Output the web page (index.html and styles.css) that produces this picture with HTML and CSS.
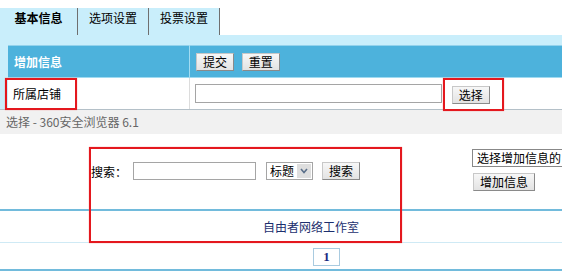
FILE: index.html
```html
<!DOCTYPE html>
<html lang="zh-CN">
<head>
  <meta charset="UTF-8" />
  <title>增加信息</title>
  <link rel="stylesheet" href="styles.css">
</head>
<body>
  <div class="tabs">
    <div class="tab active">基本信息</div>
    <div class="tab">选项设置</div>
    <div class="tab">投票设置</div>
  </div>

  <div class="panel">
    <table class="info">
      <tr class="head">
        <td class="label">增加信息</td>
        <td class="value">
          <button class="btn">提交</button>
          <button class="btn">重置</button>
        </td>
      </tr>
      <tr class="row">
        <td class="label">所属店铺</td>
        <td class="value">
          <input type="text" class="shop-input" />
          <button class="btn pick">选择</button>
        </td>
      </tr>
    </table>
  </div>

  <div class="titlebar">选择 - 360安全浏览器 6.1</div>

  <div class="popup">
    <div class="popup-top">
      <div class="search">
        <span class="search-label">搜索：</span>
        <input type="text" class="search-input" />
        <span class="select">
          <span class="select-text">标题</span>
          <span class="select-arrow">
            <svg width="10" height="8" viewBox="0 0 10 8"><path d="M2 2 L5 5.5 L8 2" fill="none" stroke="#5a6f8a" stroke-width="1.6"/></svg>
          </span>
        </span>
        <button class="btn">搜索</button>
      </div>
      <div class="side">
        <div class="side-box">选择增加信息的</div>
        <button class="btn side-btn">增加信息</button>
      </div>
    </div>
    <div class="studio">自由者网络工作室</div>
    <div class="pager"><span class="page">1</span></div>
  </div>

  <div class="mark mark-shop"></div>
  <div class="mark mark-pick"></div>
  <div class="mark mark-search"></div>
</body>
</html>
```

FILE: styles.css
```css
body {
  margin: 0;
  font-family: "Noto Sans CJK SC", "DejaVu Sans", sans-serif;
  font-size: 12px;
  color: #000;
  background: #fff;
  position: relative;
  overflow: hidden;
}

.tabs {
  display: flex;
  padding-top: 8px;
  height: 27px;
}

.tab {
  background: #c9eefb;
  border-right: 1px solid #6f6f6f;
  width: 70px;
  text-align: center;
  line-height: 18px;
  padding-top: 1px;
}

.tab.active {
  width: 77px;
  font-weight: bold;
}

.panel {
  background: #c9eefb;
  padding: 10px 0 0 8px;
}

.info {
  border-collapse: collapse;
  width: 100%;
}

.info td {
  padding: 0;
}

.head td {
  background: #4db2dc;
  height: 31px;
  border-top: 1px solid #93d2ec;
  border-bottom: 1px solid #9fdaf1;
}

.head .label {
  color: #fff;
  font-weight: bold;
  padding-left: 6px;
  width: 175px;
  border-right: 1px solid #a3dcf2;
}

.head .value {
  padding-left: 6px;
}

.row td {
  background: #fff;
  height: 31px;
}

.row .label {
  padding-left: 5px;
  border-right: 1px solid #dcdcdc;
}

.row .value {
  padding-left: 5px;
}

.btn {
  font-family: inherit;
  font-size: 12px;
  height: 18px;
  line-height: 14px;
  padding: 0 6px;
  background: linear-gradient(#f7f7f7, #e3e3e3);
  border: 1px solid #8a8a8a;
  border-top-color: #c8c8c8;
  border-left-color: #c8c8c8;
  border-radius: 0;
  margin-right: 5px;
  color: #000;
}

.shop-input {
  width: 245px;
  height: 17px;
  border: 1px solid #a5a5a5;
  padding: 0;
  margin: 0 7px 0 0;
  vertical-align: middle;
}

.pick {
  vertical-align: middle;
  margin-top: 2px;
}

.titlebar {
  height: 24px;
  line-height: 24px;
  background: #f1f1f1;
  border-top: 1px solid #b4c0c8;
  color: #666;
  padding-left: 6px;
}

.popup-top {
  display: flex;
  height: 75px;
}

.search {
  flex: 1;
  display: flex;
  align-items: center;
  padding-left: 91px;
  height: 18px;
  margin-top: 28px;
}

.search-label {
  width: 42px;
}

.search-input {
  width: 121px;
  height: 16px;
  border: 1px solid #a5a5a5;
  padding: 0;
  margin: 0 10px 0 0;
}

.select {
  display: flex;
  align-items: center;
  height: 16px;
  border: 1px solid #a5a5a5;
  margin-right: 9px;
}

.select-text {
  padding: 0 3px;
  line-height: 16px;
}

.select-arrow {
  display: flex;
  align-items: center;
  justify-content: center;
  width: 14px;
  height: 14px;
  margin-right: 1px;
  background: #dedede;
}

.side {
  width: 90px;
  padding-top: 15px;
  overflow: hidden;
}

.side-box {
  height: 16px;
  line-height: 16px;
  border: 1px solid #888;
  border-right: none;
  padding-left: 4px;
  white-space: nowrap;
  overflow: hidden;
  margin-bottom: 6px;
}

.side-btn {
  margin-left: 1px;
}

.studio {
  border-top: 2px solid #72bbdc;
  border-bottom: 1px solid #cfeaf5;
  height: 31px;
  line-height: 31px;
  text-align: center;
  padding-left: 60px;
  color: #1c2f6e;
}

.pager {
  border-bottom: 2px solid #72bbdc;
  padding-left: 91px;
  text-align: center;
  padding-top: 4px;
  box-sizing: border-box;
  height: 28px;
}

.page {
  display: inline-block;
  width: 25px;
  height: 16px;
  line-height: 16px;
  border: 1px solid #a9cbe0;
  font-family: "Liberation Serif", serif;
  font-weight: bold;
  font-size: 13px;
  color: #1a2a80;
}

.mark {
  position: absolute;
  border: 2px solid #e4181e;
  box-shadow: 0 0 1px #f08080;
}

.mark-shop {
  left: 5px;
  top: 78px;
  width: 68px;
  height: 28px;
}

.mark-pick {
  left: 443px;
  top: 78px;
  width: 57px;
  height: 29px;
}

.mark-search {
  left: 89px;
  top: 147px;
  width: 309px;
  height: 92px;
}
```
